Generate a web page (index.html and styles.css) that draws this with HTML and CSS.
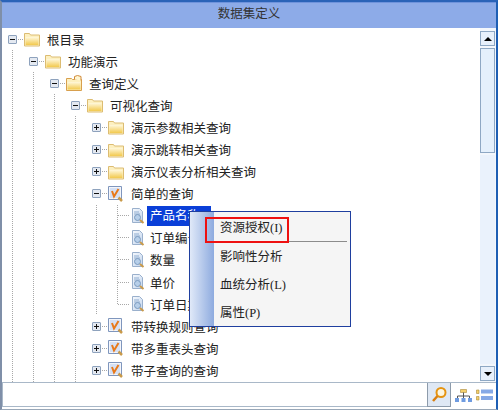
FILE: index.html
```html
<!DOCTYPE html>
<html lang="zh-CN">
<head>
  <meta charset="UTF-8">
  <title>数据集定义</title>
  <link rel="stylesheet" href="styles.css">
</head>
<body>

<svg class="sprites" width="0" height="0">
  <defs>
    <linearGradient id="gold" x1="0" y1="0" x2="0" y2="1">
      <stop offset="0" stop-color="#fff8dc"/>
      <stop offset="1" stop-color="#f2c94e"/>
    </linearGradient>
    <linearGradient id="sheet" x1="0" y1="0" x2="1" y2="1">
      <stop offset="0" stop-color="#f6f9fd"/>
      <stop offset="1" stop-color="#c4d6ee"/>
    </linearGradient>
  </defs>
  <symbol id="folder" viewBox="0 0 16 16">
    <path d="M.5 2.500h5l1 1.500h9v11H.5z" fill="#fdf0c0" stroke="#dcbc72"/>
    <path d="M1.500 6h13v8h-13z" fill="url(#gold)"/>
  </symbol>
  <symbol id="folder-lock" viewBox="0 0 16 16">
    <path d="M.5 3.500h5l1 1h9v11H.5z" fill="#fdf0c0" stroke="#d8a04e"/>
    <path d="M1.500 7h13v7.500h-13z" fill="url(#gold)"/>
    <path d="M8.500 4.500V1.500l3-1 3.500 1v4" fill="#fff6d2" stroke="#d08a3a"/>
  </symbol>
  <symbol id="query" viewBox="0 0 16 16">
    <path d="M.5.5h13v13H.5z" fill="#f4f6fb" stroke="#7f96bd"/>
    <path d="M2 2h10v10H2z" fill="#d5e0f4"/>
    <path d="M4 5l2 5.500L10.500 3" fill="none" stroke="#e8791a" stroke-width="2"/>
    <path d="M10.500 11.500l3.500 3.500" stroke="#c99a4a" stroke-width="2.500"/>
  </symbol>
  <symbol id="field" viewBox="0 0 14 16">
    <path d="M1.500.5h7l3 3v11h-10z" fill="url(#sheet)" stroke="#9ab0cc"/>
    <path d="M3 4h5M3 6h6" stroke="#8fadd0"/>
    <circle cx="6.500" cy="9.500" r="3" fill="#b7cfe9" stroke="#7a9abf"/>
    <path d="M9 12l3.500 3" stroke="#c99a4a" stroke-width="2"/>
  </symbol>
</svg>

<div class="window">
  <header class="title">数据集定义</header>

  <div class="body">
    <div class="tree">
      <div class="row"><span class="toggle minus"></span><span class="dash"></span><svg class="icon"><use href="#folder"/></svg><span class="label">根目录</span></div>
      <div class="row"><span class="guide"></span><span class="toggle minus"></span><span class="dash"></span><svg class="icon"><use href="#folder"/></svg><span class="label">功能演示</span></div>
      <div class="row"><span class="guide"></span><span class="guide"></span><span class="toggle minus"></span><span class="dash"></span><svg class="icon"><use href="#folder-lock"/></svg><span class="label">查询定义</span></div>
      <div class="row"><span class="guide"></span><span class="guide"></span><span class="guide"></span><span class="toggle minus"></span><span class="dash"></span><svg class="icon"><use href="#folder"/></svg><span class="label">可视化查询</span></div>
      <div class="row"><span class="guide"></span><span class="guide"></span><span class="guide"></span><span class="guide"></span><span class="toggle plus"></span><span class="dash"></span><svg class="icon"><use href="#folder"/></svg><span class="label">演示参数相关查询</span></div>
      <div class="row"><span class="guide"></span><span class="guide"></span><span class="guide"></span><span class="guide"></span><span class="toggle plus"></span><span class="dash"></span><svg class="icon"><use href="#folder"/></svg><span class="label">演示跳转相关查询</span></div>
      <div class="row"><span class="guide"></span><span class="guide"></span><span class="guide"></span><span class="guide"></span><span class="toggle plus"></span><span class="dash"></span><svg class="icon"><use href="#folder"/></svg><span class="label">演示仪表分析相关查询</span></div>
      <div class="row"><span class="guide"></span><span class="guide"></span><span class="guide"></span><span class="guide"></span><span class="toggle minus"></span><span class="dash"></span><svg class="icon"><use href="#query"/></svg><span class="label">简单的查询</span></div>
      <div class="row"><span class="guide"></span><span class="guide"></span><span class="guide"></span><span class="guide"></span><span class="guide"></span><span class="guide stem"></span><span class="branch"></span><svg class="icon field"><use href="#field"/></svg><span class="label selected">产品名称</span></div>
      <div class="row"><span class="guide"></span><span class="guide"></span><span class="guide"></span><span class="guide"></span><span class="guide"></span><span class="guide stem"></span><span class="branch"></span><svg class="icon field"><use href="#field"/></svg><span class="label">订单编号</span></div>
      <div class="row"><span class="guide"></span><span class="guide"></span><span class="guide"></span><span class="guide"></span><span class="guide"></span><span class="guide stem"></span><span class="branch"></span><svg class="icon field"><use href="#field"/></svg><span class="label">数量</span></div>
      <div class="row"><span class="guide"></span><span class="guide"></span><span class="guide"></span><span class="guide"></span><span class="guide"></span><span class="guide stem"></span><span class="branch"></span><svg class="icon field"><use href="#field"/></svg><span class="label">单价</span></div>
      <div class="row"><span class="guide"></span><span class="guide"></span><span class="guide"></span><span class="guide"></span><span class="guide"></span><span class="guide stem last"></span><span class="branch"></span><svg class="icon field"><use href="#field"/></svg><span class="label">订单日期</span></div>
      <div class="row"><span class="guide"></span><span class="guide"></span><span class="guide"></span><span class="guide"></span><span class="toggle plus"></span><span class="dash"></span><svg class="icon"><use href="#query"/></svg><span class="label">带转换规则查询</span></div>
      <div class="row"><span class="guide"></span><span class="guide"></span><span class="guide"></span><span class="guide"></span><span class="toggle plus"></span><span class="dash"></span><svg class="icon"><use href="#query"/></svg><span class="label">带多重表头查询</span></div>
      <div class="row"><span class="guide"></span><span class="guide"></span><span class="guide"></span><span class="guide"></span><span class="toggle plus"></span><span class="dash"></span><svg class="icon"><use href="#query"/></svg><span class="label">带子查询的查询</span></div>
    </div>

    <div class="scrollbar">
      <div class="arrow-btn"><span class="tri up"></span></div>
      <div class="thumb"></div>
      <div class="track"></div>
      <div class="arrow-btn"><span class="tri down"></span></div>
    </div>

    <ul class="menu">
      <li class="menu-item first">资源授权(I)</li>
      <li class="menu-sep"></li>
      <li class="menu-item">影响性分析</li>
      <li class="menu-item">血统分析(L)</li>
      <li class="menu-item">属性(P)</li>
    </ul>
    <div class="highlight"></div>
  </div>

  <footer class="footer">
    <div class="search-input"></div>
    <div class="search-btn">
      <svg width="16" height="17" viewBox="0 0 16 17"><circle cx="10" cy="6.500" r="4.500" fill="#fdf6e0" stroke="#e59412" stroke-width="2"/><path d="M6.500 10l-4.500 5" stroke="#d97f10" stroke-width="2.500"/></svg>
    </div>
    <svg class="tool" width="17" height="13" viewBox="0 0 17 13">
      <path d="M5.500.5h6v3h-6z" fill="#f4cf6a" stroke="#a98a3a" stroke-width=".6"/>
      <path d="M8.500 3.500v3.500M2.500 7h12M2.500 7v2M8.500 7v2M14.500 7v2" stroke="#555" fill="none"/>
      <path d="M0 9h4v4H0zM6.500 9h4v4h-4zM13 9h4v4h-4z" fill="#6f9be0"/>
    </svg>
    <svg class="tool" width="17" height="12" viewBox="0 0 17 12">
      <path d="M.5 1h2.500v3.500H.5zM.5 7.500h2.500V11H.5z" fill="#f4cf6a" stroke="#a98a3a" stroke-width=".6"/>
      <path d="M5 .5h12v4H5zM5 7h12v4H5z" fill="#86a9e6"/>
    </svg>
  </footer>
</div>

</body>
</html>
```

FILE: styles.css
```css
html, body {
  margin: 0;
  padding: 0;
}

body {
  width: 498px;
  height: 411px;
  overflow: hidden;
  background-color: #fff;
  font-family: "Liberation Serif", "Noto Sans CJK SC", serif;
  font-size: 12.5px;
  color: #222;
}

.sprites {
  display: block;
  height: 0;
}

.window {
  display: flex;
  flex-direction: column;
  box-sizing: border-box;
  height: 410px;
  border-top: 2px solid #2a63b8;
  border-left: 2px solid #7f8fa8;
  border-right: 2px solid #1e5fb4;
  border-bottom: 1px solid #9aa8b8;
}

.title {
  height: 26px;
  line-height: 25px;
  text-align: center;
  background-color: #8dabe8;
  box-shadow: inset 0 1px 0 #6f93dc;
  color: #333;
}

.body {
  position: relative;
  display: flex;
  height: 354px;
  background-color: #fff;
}

.tree {
  flex: 1;
  overflow: hidden;
}

.row {
  display: flex;
  align-items: center;
  height: 22.100px;
  padding-left: 6px;
  white-space: nowrap;
}

.guide {
  align-self: stretch;
  flex: none;
  width: 21px;
  background: repeating-linear-gradient(to bottom, #a8a8a8 0 1px, transparent 1px 2px) 4px 0 / 1px 100% no-repeat;
}

.guide.stem {
  width: 5px;
}

.guide.last {
  background-size: 1px 50%;
}

.toggle {
  position: relative;
  flex: none;
  box-sizing: border-box;
  width: 9px;
  height: 9px;
  border: 1px solid #8ea2bd;
  border-radius: 1px;
  background-color: #e4e9f1;
}

.toggle::before {
  content: "";
  position: absolute;
  left: 1px;
  top: 3px;
  width: 5px;
  height: 1px;
  background-color: #111;
}

.toggle.plus::after {
  content: "";
  position: absolute;
  left: 3px;
  top: 1px;
  width: 1px;
  height: 5px;
  background-color: #111;
}

.dash {
  flex: none;
  width: 5px;
  height: 1px;
  margin: 0 1px;
  background: repeating-linear-gradient(to right, #a8a8a8 0 1px, transparent 1px 2px);
}

.branch {
  flex: none;
  width: 12px;
  height: 1px;
  margin-right: 1px;
  background: repeating-linear-gradient(to right, #a8a8a8 0 1px, transparent 1px 2px);
}

.icon {
  flex: none;
  width: 16px;
  height: 16px;
}

.icon.field {
  width: 14px;
}

.label {
  margin-left: 7px;
}

.icon.field + .label {
  margin-left: 2px;
  padding: 0 3px;
}

.icon.field + .label.selected {
  padding-right: 11px;
  background-color: #0a3fd8;
  color: #fff;
  line-height: 20px;
}

.scrollbar {
  display: flex;
  flex-direction: column;
  flex: none;
  gap: 2px;
  box-sizing: border-box;
  width: 16px;
  padding: 3px 1px 1px 0;
  background-color: #f3f7fc;
}

.arrow-btn {
  display: flex;
  align-items: center;
  justify-content: center;
  box-sizing: border-box;
  flex: none;
  height: 15px;
  border: 1px solid #8ea8c4;
  background-color: #e7f0fb;
}

.thumb {
  flex: none;
  box-sizing: border-box;
  height: 105px;
  border: 1px solid #8ea8c4;
  background-color: #e4f0fc;
}

.track {
  flex: 1;
  background-color: #eaf2fc;
}

.tri {
  width: 0;
  height: 0;
  border-left: 4px solid transparent;
  border-right: 4px solid transparent;
}

.tri.up {
  border-bottom: 4px solid #000;
}

.tri.down {
  border-top: 4px solid #000;
}

/* context menu */
.menu {
  position: absolute;
  left: 187px;
  top: 183px;
  box-sizing: border-box;
  width: 162px;
  height: 116px;
  margin: 0;
  padding: 0 0 0 24px;
  list-style: none;
  border: 1px solid #1f3f9f;
  background: linear-gradient(to right, #e0e9f8, #8eabdf) 0 0 / 24px 100% no-repeat #f5f5f5;
}

.menu-item {
  height: 28px;
  line-height: 28px;
  padding-left: 6px;
}

.menu-item.first {
  height: 29px;
  line-height: 33px;
}

.menu-sep {
  height: 1px;
  margin-right: 3px;
  margin-bottom: 1px;
  background-color: #8c8c8c;
}

.highlight {
  position: absolute;
  left: 203px;
  top: 189px;
  box-sizing: border-box;
  width: 84px;
  height: 26px;
  border: 2px solid #ee1111;
}

/* search bar */
.footer {
  display: flex;
  align-items: center;
  box-sizing: border-box;
  height: 27px;
  padding-bottom: 2px;
  border-top: 1px solid #a9b8c8;
}

.search-input {
  align-self: stretch;
  flex: none;
  width: 424px;
  border-left: 1px solid #a9b8c8;
  border-bottom: 1px solid #a9b8c8;
}

.search-btn {
  display: flex;
  align-items: center;
  justify-content: center;
  align-self: stretch;
  box-sizing: border-box;
  flex: none;
  width: 24px;
  border: 1px solid #8d9bab;
  border-top-width: 0;
  background-color: #dfe8f4;
}

.tool {
  flex: none;
  margin-left: 4px;
}
```
